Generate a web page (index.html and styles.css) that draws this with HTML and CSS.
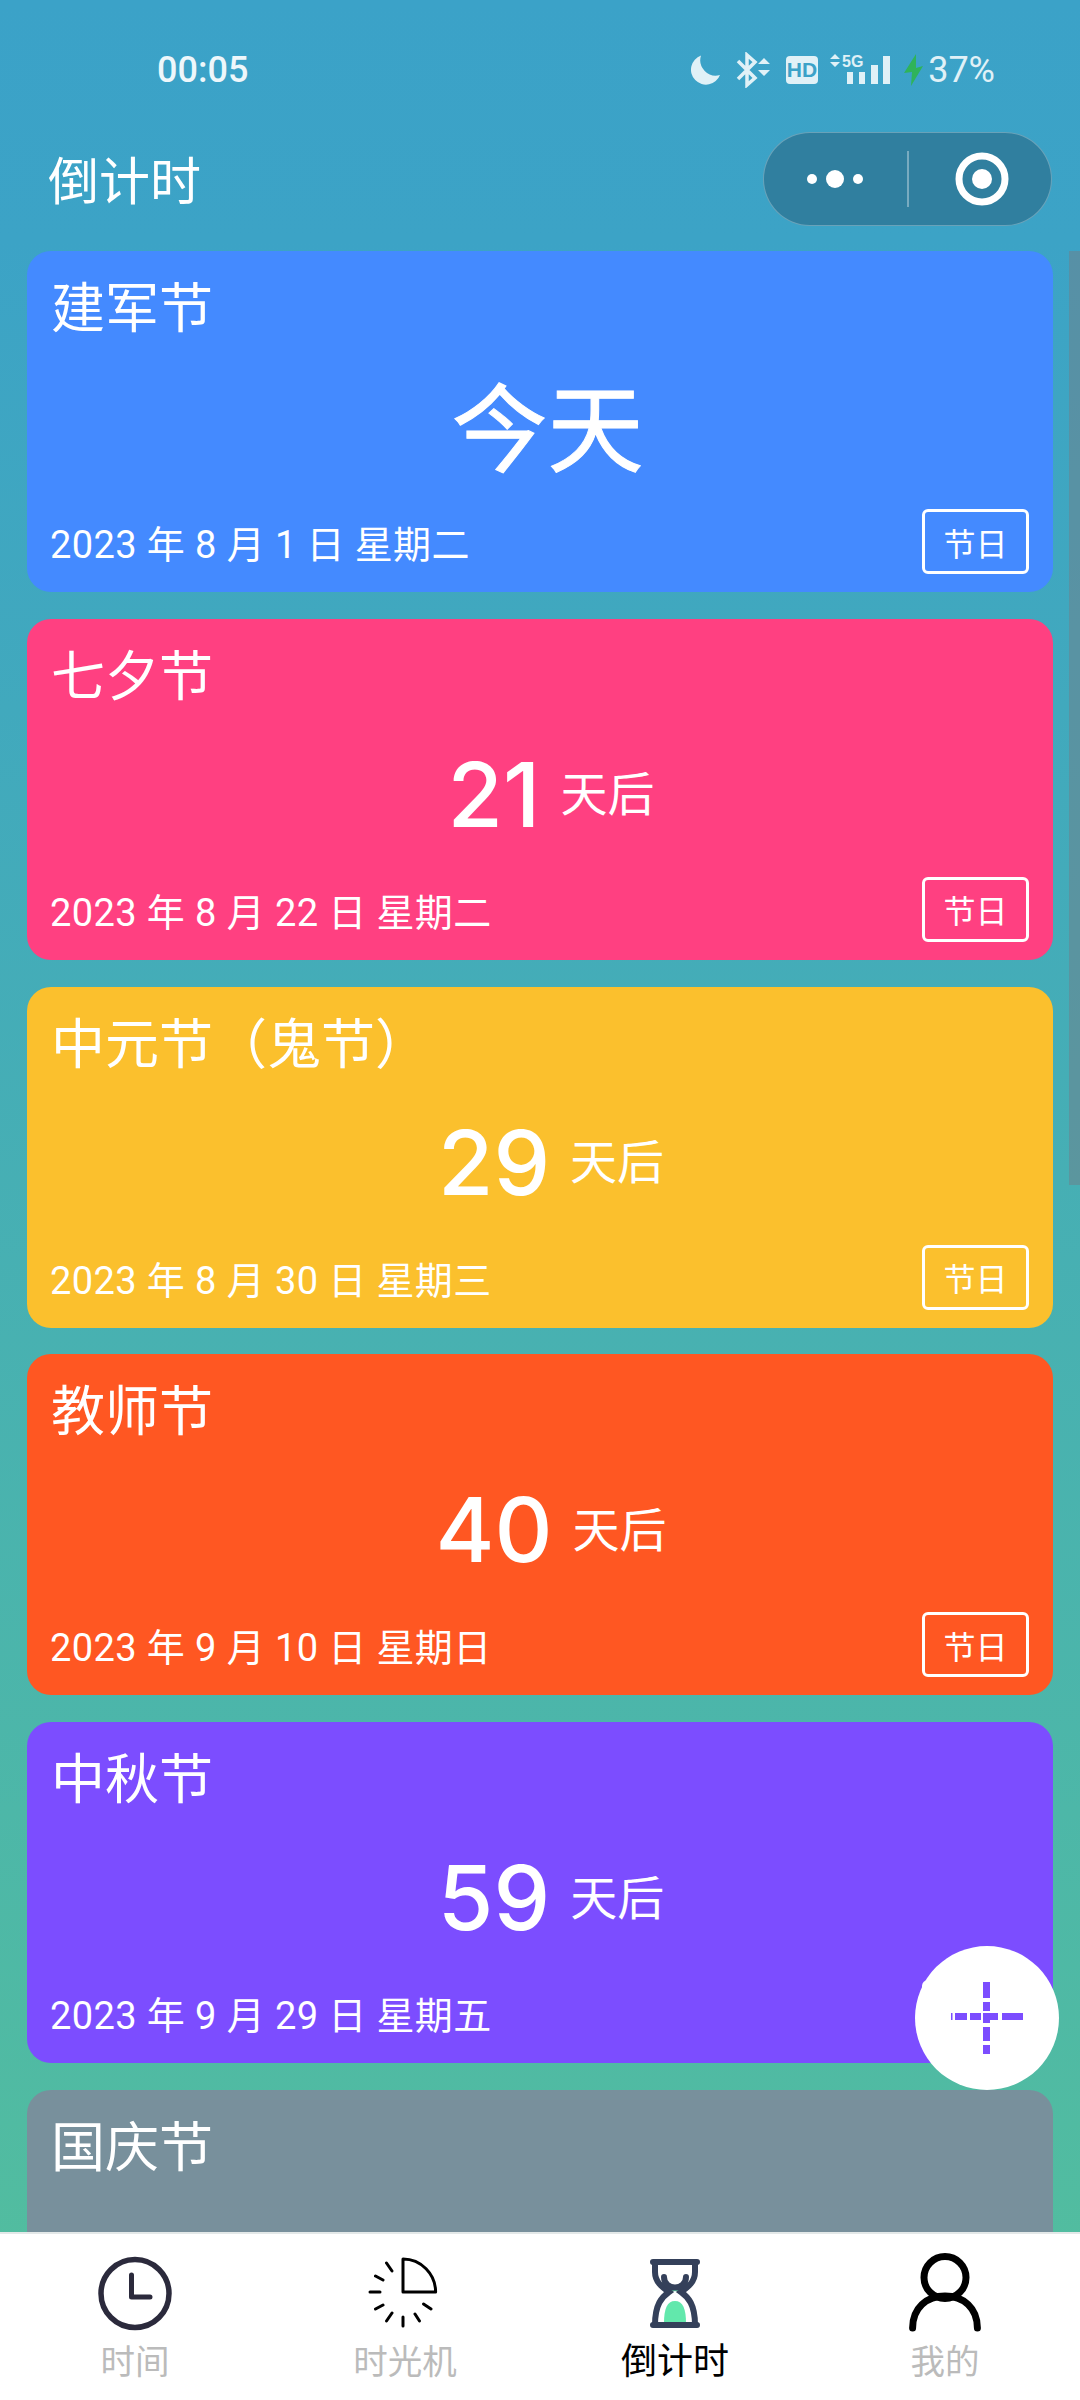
FILE: index.html
```html
<!DOCTYPE html>
<html lang="zh-CN">
<head>
<meta charset="utf-8">
<title>倒计时</title>
<link rel="stylesheet" href="styles.css">
</head>
<body>
<div class="page">
  <div class="status">
    <span class="time">00:05</span>
    <div class="status-icons">
      <svg class="ic-moon" width="32" height="32" viewBox="0 0 32 32"><path class="fill-s" d="M12 1.500A15 15 0 1 0 31 21 A15.500 15.500 0 0 1 12 1.500Z"/></svg>
      <svg class="ic-bt" width="36" height="36" viewBox="0 0 36 36"><path class="line-s" d="M2 9l17 17-8 7V3l8 7L2 27"/><path class="fill-s" d="M28 6l6 6H22zM28 24l6-6H22z"/></svg>
      <svg class="ic-hd" width="32" height="28" viewBox="0 0 32 28"><rect class="fill-s" width="32" height="28" rx="4"/><text class="hd-text" x="16" y="21" text-anchor="middle">HD</text></svg>
      <svg class="ic-sig" width="62" height="32" viewBox="0 0 62 32"><path class="fill-s" d="M6 0l5 5H1zM6 13l5-5H1z"/><text class="sg-text" x="13" y="13">5G</text><rect class="fill-s" x="18" y="18" width="6" height="12"/><rect class="fill-s" x="30" y="18" width="6" height="12"/><rect class="fill-s" x="42" y="11" width="7" height="19"/><rect class="fill-s" x="54" y="2" width="7" height="28"/></svg>
      <svg class="ic-bolt" width="20" height="32" viewBox="0 0 20 32"><path d="M12 0L0 19l8-1-1 14L19 12l-7 2z" fill="#2fb35a"/></svg>
      <span class="pct">37%</span>
    </div>
  </div>
  <div class="navbar">
    <span class="nav-title">倒计时</span>
    <div class="capsule">
      <svg width="94" height="20" viewBox="0 0 94 20" class="cap-dots"><circle class="dot" cx="15" cy="10" r="5"/><circle class="dot" cx="38" cy="10" r="9"/><circle class="dot" cx="61" cy="10" r="5"/></svg>
      <span class="cap-line"></span>
      <svg width="54" height="54" viewBox="0 0 54 54" class="cap-target"><circle cx="27" cy="27" r="23" fill="none" stroke="#fff" stroke-width="7"/><circle class="dot" cx="27" cy="27" r="10"/></svg>
    </div>
  </div>
  <div class="list">
    <div class="card blue">
      <div class="card-title">建军节</div>
      <div class="card-mid"><span class="today">今天</span></div>
      <div class="card-foot"><span class="date">2023 年 8 月 1 日 星期二</span><span class="tag">节日</span></div>
    </div>
    <div class="card pink">
      <div class="card-title">七夕节</div>
      <div class="card-mid"><span class="num">21</span><span class="unit">天后</span></div>
      <div class="card-foot"><span class="date">2023 年 8 月 22 日 星期二</span><span class="tag">节日</span></div>
    </div>
    <div class="card yellow">
      <div class="card-title">中元节（鬼节）</div>
      <div class="card-mid"><span class="num">29</span><span class="unit">天后</span></div>
      <div class="card-foot"><span class="date">2023 年 8 月 30 日 星期三</span><span class="tag">节日</span></div>
    </div>
    <div class="card orange">
      <div class="card-title">教师节</div>
      <div class="card-mid"><span class="num">40</span><span class="unit">天后</span></div>
      <div class="card-foot"><span class="date">2023 年 9 月 10 日 星期日</span><span class="tag">节日</span></div>
    </div>
    <div class="card purple">
      <div class="card-title">中秋节</div>
      <div class="card-mid"><span class="num">59</span><span class="unit">天后</span></div>
      <div class="card-foot"><span class="date">2023 年 9 月 29 日 星期五</span><span class="tag">节日</span></div>
    </div>
    <div class="card gray">
      <div class="card-title">国庆节</div>
    </div>
  </div>
  <nav class="tabbar">
    <div class="tab">
      <svg width="80" height="80" viewBox="0 0 80 80"><circle cx="40" cy="41.500" r="34" fill="none" stroke="#2b2a3c" stroke-width="5.500"/><path d="M36.500 23v22H55" fill="none" stroke="#2b2a3c" stroke-width="5" stroke-linecap="round" stroke-linejoin="round"/></svg>
      <span class="tab-label">时间</span>
    </div>
    <div class="tab">
      <svg width="80" height="80" viewBox="0 0 80 80"><path d="M38 7c18 0 32.600 15 32.600 33H38z" fill="none" stroke="#000" stroke-width="3" stroke-linejoin="round"/><path d="M5 40h10M10.500 24l7.500 4M21.500 11l5.500 8M10.500 57l7.500-4M21.500 69l5.500-8M38 65v9M50 62l4.500 7M58.500 52l7.500 5" fill="none" stroke="#000" stroke-width="3" stroke-linecap="round"/></svg>
      <span class="tab-label">时光机</span>
    </div>
    <div class="tab active">
      <svg width="80" height="80" viewBox="0 0 80 80"><path d="M29 71c0-14 3-22 11-22s11 8 11 22z" fill="#62e8ac"/><path d="M26 31c3 4 8 7 14 7s11-3 14-7" fill="none" stroke="#62e8ac" stroke-width="2.500"/><path d="M20 10v10c0 10 7 15 14 20-7 5-14 12-14 33M60 10v10c0 10-7 15-14 20 7 5 14 12 14 33" fill="none" stroke="#34405a" stroke-width="6"/><path d="M18 10h44M18 73h44" stroke="#34405a" stroke-width="6" stroke-linecap="round"/><path d="M29 25c0 14 22 14 22 0" fill="none" stroke="#34405a" stroke-width="6" stroke-linecap="round"/></svg>
      <span class="tab-label">倒计时</span>
    </div>
    <div class="tab">
      <svg width="80" height="80" viewBox="0 0 80 80"><circle cx="40" cy="25.500" r="21" fill="none" stroke="#000" stroke-width="7"/><path d="M7.600 76c0-20 14-32 32.400-32s32.400 12 32.400 32" fill="none" stroke="#000" stroke-width="7" stroke-linecap="round"/></svg>
      <span class="tab-label">我的</span>
    </div>
  </nav>
  <div class="scrollbar"></div>
  <div class="fab">
    <svg width="74" height="74" viewBox="0 0 74 74"><path class="plus" d="M33 1h7v16h-7zM33 21h7v9h-7zM33 33h7v9h-7zM33 46h7v14h-7zM33 64h7v9h-7zM1 32h1.500v7H1zM5 32h12v7H5zM20 32h11v7H20zM33 32h15v7H33zM52 32h21v7H52z"/></svg>
  </div>
</div>
</body>
</html>
```

FILE: styles.css
```css
* { box-sizing: border-box; }
html, body { margin: 0; padding: 0; }
body { font-family: Roboto, "Noto Sans CJK SC", sans-serif; color: #fff; }

.page {
  position: relative;
  width: 1080px;
  height: 2400px;
  overflow: hidden;
  display: flex;
  flex-direction: column;
  background: linear-gradient(180deg, #3ba2c8 0%, #3ca3c6 10%, #52bd9f 95%);
}

.status {
  height: 132px;
  flex: none;
  display: flex;
  align-items: center;
  justify-content: space-between;
  padding: 8px 85px 0 157px;
}
.time { font-size: 36px; font-weight: 500; color: #eef7fb; }
.status-icons { display: flex; align-items: center; }
.ic-moon { margin-right: -1px; }
.ic-bt { margin-left: 16px; }
.ic-hd { margin-left: 14px; }
.ic-sig { margin-left: 11px; }
.ic-bolt { margin-left: 13px; }
.pct { font-size: 36px; margin-left: 4px; color: #e0f1f7; }
.fill-s { fill: #e0f1f7; }
.line-s { fill: none; stroke: #e0f1f7; stroke-width: 3.500; }
.hd-text { font-family: "Liberation Sans", sans-serif; font-size: 21px; font-weight: 700; fill: #3ba2c8; }
.sg-text { font-family: "Liberation Sans", sans-serif; font-size: 16px; font-weight: 700; fill: #e0f1f7; }

.navbar {
  height: 119px;
  flex: none;
  display: flex;
  align-items: flex-start;
  justify-content: space-between;
  padding: 0 28px 0 48px;
}
.nav-title { font-size: 51px; line-height: 94px; padding-top: 4px; color: #fff; }
.capsule {
  width: 289px;
  height: 94px;
  display: flex;
  align-items: center;
  border-radius: 47px;
  background: #307f9f;
  border: 1.500px solid rgba(255, 255, 255, 0.28);
}
.cap-dots { margin-left: 33px; }
.cap-line { width: 1.500px; height: 56px; margin-left: 16px; background: rgba(255, 255, 255, 0.35); }
.cap-target { margin-left: 46px; }
.dot { fill: #fff; }

.list {
  flex: 1;
  min-height: 0;
  overflow: hidden;
  display: flex;
  flex-direction: column;
  gap: 26.800px;
  padding: 0 27px;
}
.card {
  flex: none;
  height: 341px;
  border-radius: 24px;
  padding: 0 24px 18px;
  display: flex;
  flex-direction: column;
}
.blue { background: #448aff; }
.pink { background: #ff4081; }
.yellow { background: #fbc02d; }
.orange { background: #ff5722; }
.purple { background: #7c4dff; }
.gray { background: #78909c; }

.card-title { font-size: 54px; line-height: 74px; margin-top: 22px; margin-bottom: -2px; flex: none; }
.card-mid {
  flex: 1;
  min-height: 0;
  display: flex;
  align-items: center;
  justify-content: center;
  padding-left: 22px;
}
.today { font-size: 96px; line-height: 1; padding-top: 8px; padding-right: 7px; -webkit-text-stroke: 1px #fff; }
.num { font-family: Inter, Roboto, sans-serif; font-size: 90px; font-weight: 500; line-height: 1; }
.unit { font-size: 47px; margin-left: 20px; margin-bottom: 8px; }
.card-foot { flex: none; display: flex; align-items: center; justify-content: space-between; height: 65px; }
.date { font-size: 38px; letter-spacing: 0.400px; margin-left: -1px; }
.tag {
  width: 107px;
  height: 65px;
  display: flex;
  align-items: center;
  justify-content: center;
  border: 3px solid #fff;
  border-radius: 6px;
  font-size: 32px;
}

.tabbar {
  flex: none;
  height: 168px;
  display: grid;
  grid-template-columns: repeat(4, 1fr);
  background: #fff;
  border-top: 2px solid #e3e8e8;
}
.tab { display: flex; flex-direction: column; align-items: center; padding-top: 18px; }
.tab-label { font-size: 34.500px; line-height: 48px; margin-top: 6px; color: #bbb; }
.active .tab-label { color: #000; font-size: 36px; }

.scrollbar {
  position: absolute;
  right: 0;
  top: 251px;
  width: 11px;
  height: 934px;
  background: rgba(110, 130, 140, 0.55);
}
.fab {
  position: absolute;
  left: 915px;
  top: 1946px;
  width: 144px;
  height: 144px;
  border-radius: 50%;
  background: #fff;
  display: flex;
  align-items: center;
  justify-content: center;
}
.plus { fill: #7c4dff; }
```
